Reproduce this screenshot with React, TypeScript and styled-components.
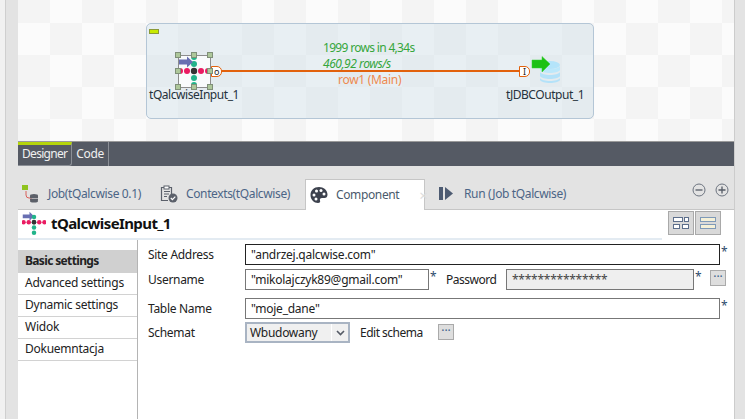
import React from "react";
import styled, { createGlobalStyle } from "styled-components";

/* -------------------------------------------------------------------------- */

const GlobalStyle = createGlobalStyle`
  html, body {
    margin: 0;
    background: #e3e3e3;
  }
  * {
    box-sizing: border-box;
  }
`;

const uiFont = `"Noto Sans", "Open Sans", sans-serif`;

const Page = styled.div`
  width: 745px;
  height: 419px;
  overflow: hidden;
  display: flex;
  font: 12px/16px ${uiFont};
  letter-spacing: -0.3px;
  color: #2a2a2a;
`;

const LeftRail = styled.div`
  width: 18px;
  flex: none;
  background: linear-gradient(to right, #f1f1f1 5px, #cfcfcf 5px, #cfcfcf 6px, #e3e3e3 6px);
`;

const RightRail = styled.div`
  width: 11px;
  flex: none;
  border-left: 1px solid #cccccc;
`;

const Main = styled.div`
  width: 716px;
  flex: none;
  display: flex;
  flex-direction: column;
`;

/* ------------------------------ Job designer ------------------------------ */

const Canvas = styled.div`
  position: relative;
  height: 142px;
  flex: none;
  background-color: #fbfbfb;
  background-image: conic-gradient(#f4f4f4 25%, transparent 0 50%, #f4f4f4 0 75%, transparent 0);
  background-size: 64px 64px;
  background-position: 32px -9px;
  border-bottom: 1px solid #9a9a9a;
`;

const Subjob = styled.div`
  position: absolute;
  left: 128px;
  top: 23px;
  width: 448px;
  height: 96px;
  background: rgba(205, 222, 232, 0.4);
  border: 1px solid #b4c6d6;
  border-radius: 5px;
`;

const CollapseTag = styled.div`
  position: absolute;
  left: 131px;
  top: 29px;
  width: 10px;
  height: 5px;
  background: #c8ea00;
  border: 1px solid #8b9a38;
`;

const NodeFrame = styled.div`
  position: absolute;
  left: 160px;
  top: 55px;
  width: 33px;
  height: 33px;
  border: 1px solid #8d8d8d;
  background: rgba(255, 255, 255, 0.75);
`;

const Handle = styled.span<{ $x: number; $y: number }>`
  position: absolute;
  left: ${p => p.$x}px;
  top: ${p => p.$y}px;
  width: 6px;
  height: 6px;
  background: #adc79a;
  border: 1px solid #7f8f78;
`;

const FlowLine = styled.div`
  position: absolute;
  left: 202px;
  top: 70px;
  width: 300px;
  height: 2px;
  background: #e2610c;
`;

const Connector = styled.div<{ $x: number }>`
  position: absolute;
  left: ${p => p.$x}px;
  top: 66px;
  width: 11px;
  height: 11px;
  background: #ffffff;
  border: 1px solid #e2610c;
  border-radius: 0 5px 5px 0;
  color: #222222;
  font-size: 9px;
  line-height: 9px;
  text-align: center;
`;

const NodeLabel = styled.div<{ $x: number }>`
  position: absolute;
  left: ${p => p.$x}px;
  top: 87px;
  white-space: nowrap;
  letter-spacing: -0.45px;
  color: #26323c;
`;

const Stat = styled.div<{ $x: number; $y: number; $italic?: boolean; $orange?: boolean; $tight?: number }>`
  position: absolute;
  left: ${p => p.$x}px;
  top: ${p => p.$y}px;
  white-space: nowrap;
  letter-spacing: ${p => p.$tight ?? -0.3}px;
  color: ${p => (p.$orange ? "#ee8a4f" : "#35a63c")};
  font-style: ${p => (p.$italic ? "italic" : "normal")};
`;

const NodeIcon = styled.svg<{ $x: number; $y: number }>`
  position: absolute;
  left: ${p => p.$x}px;
  top: ${p => p.$y}px;
`;

/* ---------------------------- Designer / Code bar --------------------------- */

const EditorBar = styled.div`
  height: 24px;
  flex: none;
  display: flex;
  background: #555a64;
  margin-bottom: 13px;
`;

const EditorTab = styled.div<{ $active?: boolean }>`
  padding: ${p => (p.$active ? "1px 4px 0" : "4px 4px 0")};
  border-top: ${p => (p.$active ? "3px solid #b5d50c" : "none")};
  border-right: 1px solid #8b8f96;
  border-bottom: ${p => (p.$active ? "1px solid #8b8f96" : "none")};
  border-bottom-right-radius: ${p => (p.$active ? "3px" : "0")};
  letter-spacing: ${p => (p.$active ? "-0.7px" : "-0.3px")};
  color: #f0f0f0;
`;

/* ------------------------------- Tabbed panel ------------------------------ */

const TabRow = styled.div`
  height: 31px;
  flex: none;
  display: flex;
  align-items: stretch;
  position: relative;
  border-bottom: 1px solid #c6c6c6;
`;

const Tab = styled.div<{ $w: number; $pad: number; $active?: boolean }>`
  width: ${p => p.$w}px;
  padding-left: ${p => p.$pad}px;
  display: flex;
  align-items: center;
  gap: 8px;
  letter-spacing: -0.37px;
  color: ${p => (p.$active ? "#4a5a6c" : "#4c6586")};
  background: ${p => (p.$active ? "#ffffff" : "transparent")};
  ${p => (p.$active ? "border: 1px solid #c6c6c6; border-bottom: none; height: 31px;" : "")}
`;

const TabIcon = styled.svg`
  width: 18px;
  height: 18px;
  flex: none;
`;

const TabClose = styled.span`
  margin-left: 12px;
  color: #dddddd;
  font-size: 15px;
`;

const WindowButtons = styled.div`
  margin-left: auto;
  padding: 4px 5px 0 0;
  display: flex;
  gap: 9px;
`;

/* --------------------------------- Header --------------------------------- */

const Header = styled.div`
  height: 30px;
  flex: none;
  display: flex;
  background: #ffffff;
`;

const TitleBar = styled.div`
  width: 644px;
  display: flex;
  align-items: center;
  gap: 5px;
  padding: 0 0 2px 4px;
  border-bottom: 2px solid #e3ebf2;
`;

const Title = styled.h1`
  margin: 0;
  font: 700 15px/20px ${uiFont};
  letter-spacing: -0.6px;
  color: #111111;
`;

const ViewButtons = styled.div`
  display: flex;
  gap: 1px;
  padding: 1px 0 0 6px;
`;

const ViewButton = styled.button`
  width: 26px;
  height: 24px;
  padding: 0;
  display: flex;
  align-items: center;
  justify-content: center;
  background: #d9d9d9;
  border: 1px solid #a9a9a9;
`;

/* ---------------------------------- Body ---------------------------------- */

const Body = styled.div`
  flex: 1;
  display: flex;
  background: #ffffff;
`;

const Sidebar = styled.nav`
  width: 120px;
  flex: none;
  padding-top: 10px;
  border-right: 1px solid #b4b4b4;
`;

const SideItem = styled.div<{ $active?: boolean }>`
  height: ${p => (p.$active ? "23px" : "22px")};
  line-height: ${p => (p.$active ? "22px" : "20px")};
  padding-left: 7px;
  background: ${p => (p.$active ? "#d0d0d0" : "transparent")};
  border-bottom: ${p => (p.$active ? "none" : "1px solid #d2d2d2")};
  font-weight: ${p => (p.$active ? 700 : 400)};
  letter-spacing: ${p => (p.$active ? "-0.65px" : "-0.25px")};
  color: #222222;
`;

const Form = styled.div`
  flex: 1;
  padding: 4px 0 0 10px;
`;

const FormRow = styled.div<{ $top: number }>`
  display: flex;
  align-items: flex-start;
  margin-top: ${p => p.$top}px;
`;

const FieldLabel = styled.label`
  width: 97px;
  flex: none;
  line-height: 21px;
  color: #222222;
`;

const TextField = styled.input<{ $w: number; $focus?: boolean; $muted?: boolean }>`
  width: ${p => p.$w}px;
  height: 21px;
  padding: 0 0 0 5px;
  font: 12px ${uiFont};
  letter-spacing: -0.25px;
  color: ${p => (p.$muted ? "#444444" : "#222222")};
  background: ${p => (p.$muted ? "#efefef" : "#ffffff")};
  border: 1px solid ${p => (p.$focus ? "#222222" : "#777777")};
  border-radius: 0;
  outline: none;
`;

const Required = styled.span`
  width: 10px;
  flex: none;
  padding-left: 1px;
  line-height: 15px;
  color: #2e4a6b;
`;

const InlineLabel = styled.label<{ $w: number; $left: number }>`
  width: ${p => p.$w}px;
  flex: none;
  margin-left: ${p => p.$left}px;
  line-height: 21px;
  letter-spacing: -0.5px;
  color: #222222;
`;

const DotsButton = styled.button<{ $left: number; $top: number }>`
  width: 16px;
  height: 16px;
  flex: none;
  margin: ${p => p.$top}px 0 0 ${p => p.$left}px;
  padding: 0 0 3px;
  background: #dedede;
  border: 1px solid #aaaaaa;
  color: #3f5f8a;
  font: 12px/10px ${uiFont};
`;

const SelectBox = styled.div`
  width: 105px;
  height: 21px;
  flex: none;
  display: flex;
  background: #f0f0f0;
  border: 2px solid #a9b4c3;
`;

const SelectValue = styled.span`
  flex: 1;
  padding-left: 3px;
  line-height: 17px;
  color: #222222;
`;

const SelectArrow = styled.span`
  width: 17px;
  flex: none;
  display: flex;
  align-items: center;
  justify-content: center;
  border-left: 1px solid #ffffff;
`;

/* ---------------------------------- Icons --------------------------------- */

const HeaderMark = () => (
  <svg width="24" height="24" viewBox="0 0 32 32">
    <path d="M1 4.5h9V1l6 6-6 6V9.5H1z" fill="#686fb2" />
    {[2, 9, 23, 30].map(x => <circle key={x} cx={x} cy="15" r="3" fill="#ea1c62" />)}
    {[8, 22, 29].map(y => <circle key={y} cx="16" cy={y} r="3" fill="#21b48a" />)}
    <circle cx="16" cy="15" r="3.2" fill="#333333" />
  </svg>
);

const JobIcon = () => (
  <TabIcon viewBox="0 0 18 18">
    <path d="M4 6v4q0 3 3 3h3" fill="none" stroke="#d9605a" />
    <rect x="0" y="0" width="6" height="5" fill="#8fc31f" />
    <ellipse cx="12" cy="10.5" rx="4" ry="1.5" fill="#5c6069" />
    <rect x="8" y="11" width="8" height="2" fill="#5c6069" />
    <rect x="8" y="13.6" width="8" height="2" fill="#5c6069" />
    <ellipse cx="12" cy="16" rx="4" ry="1.5" fill="#5c6069" />
  </TabIcon>
);

const ContextsIcon = () => (
  <TabIcon viewBox="0 0 18 18">
    <path d="M8 15.5H1.5v-13h10v8" fill="none" stroke="#5b606a" strokeWidth="1.2" />
    <rect x="4" y="1" width="5" height="3" fill="#ffffff" stroke="#5b606a" />
    <path d="M4 6.5h6M4 9h5M4 11.5h3" stroke="#5b606a" />
    <circle cx="13" cy="13" r="4.5" fill="#5b606a" />
    <path d="M10.8 13l1.6 1.7 2.9-3" fill="none" stroke="#ffffff" strokeWidth="1.2" />
  </TabIcon>
);

const PaletteIcon = () => (
  <TabIcon viewBox="0 0 18 18">
    <path
      d="M9 1C4 1 .5 4.5.5 9S4 17 8 17c2 0 2.5-1.2 2-2.4-.5-1.3.3-2.6 2-2.6h2.5c1.8 0 3-1 3-3.5C17.5 4 13.5 1 9 1z"
      fill="#3d424e"
    />
    <circle cx="4" cy="9" r="1.5" fill="#ffffff" />
    <circle cx="6.5" cy="5" r="1.5" fill="#ffffff" />
    <circle cx="11" cy="4.5" r="1.5" fill="#ffffff" />
    <circle cx="14" cy="8" r="1.5" fill="#ffffff" />
    <circle cx="6" cy="13" r="1.5" fill="#ffffff" />
  </TabIcon>
);

const RunIcon = () => (
  <TabIcon viewBox="0 0 18 18">
    <rect x="1" y="2" width="4" height="13" fill="#4d5b72" />
    <path d="M7 2l8 6.5L7 15z" fill="#4d5b72" />
  </TabIcon>
);

const RoundButton = ({ plus }: { plus?: boolean }) => (
  <svg width="14" height="14" viewBox="0 0 14 14">
    <circle cx="7" cy="7" r="6" fill="none" stroke="#6d7480" />
    <path d={plus ? "M3.5 7h7M7 3.5v7" : "M3.5 7h7"} stroke="#555b66" strokeWidth="1.3" />
  </svg>
);

const TwoColumnsIcon = () => (
  <svg width="16" height="14" viewBox="0 0 16 14">
    <g fill="#ffffff" stroke="#5d6f8c">
      <rect x=".5" y="1.5" width="9" height="4" />
      <rect x="11.5" y="1.5" width="4" height="4" />
      <rect x=".5" y="8.5" width="6" height="4" />
      <rect x="9.5" y="8.5" width="6" height="4" />
    </g>
  </svg>
);

const OneColumnIcon = () => (
  <svg width="16" height="14" viewBox="0 0 16 14">
    <g fill="#f4f0d8" stroke="#7f9ab8">
      <rect x=".5" y="1.5" width="15" height="4" />
      <rect x=".5" y="8.5" width="15" height="4" />
    </g>
  </svg>
);

/* -------------------------------------------------------------------------- */

const sideItems = ["Advanced settings", "Dynamic settings", "Widok", "Dokuemntacja"];

const handles = [
  [-4, -4], [12, -4], [28, -4],
  [-4, 12], [28, 12],
  [-4, 28], [12, 28], [28, 28],
];

const App = () => {
  return (
    <Page>
      <GlobalStyle />
      <LeftRail />
      <Main>
        <Canvas>
          <Subjob />
          <CollapseTag />
          <Stat $x={305} $y={40} $tight={-0.68}>1999 rows in 4,34s</Stat>
          <Stat $x={305} $y={56} $italic $tight={-0.45}>460,92 rows/s</Stat>
          <Stat $x={320} $y={72} $orange>row1 (Main)</Stat>
          <FlowLine />
          <Connector $x={193}>o</Connector>
          <NodeFrame>
            <NodeIcon $x={-1} $y={-1} width="33" height="33" viewBox="0 0 33 33">
              {[2, 9, 23, 30].map(x => <circle key={x} cx={x} cy="16" r="3" fill="#ea1c62" />)}
              {[2, 9, 23, 30].map(y => <circle key={y} cx="16" cy={y} r="3" fill="#21b48a" />)}
              <circle cx="16" cy="16" r="3.2" fill="#333333" />
              <path d="M1 4.5h8V1.5l6 5.5-6 5.5V9.5H1z" fill="#686fb2" />
            </NodeIcon>
            {handles.map(([x, y]) => <Handle key={`${x}-${y}`} $x={x} $y={y} />)}
          </NodeFrame>
          <NodeLabel $x={131}>tQalcwiseInput_1</NodeLabel>
          <Connector $x={501}>I</Connector>
          <NodeIcon $x={513} $y={56} width="30" height="30" viewBox="0 0 30 30">
            <ellipse cx="19" cy="9" rx="10" ry="4" fill="#b4e4fa" />
            <path d="M9 10c2 4 18 4 20 0v4c-2 4-18 4-20 0z" fill="#bce8fb" />
            <path d="M9 16c2 4 18 4 20 0v4c-2 4-18 4-20 0z" fill="#b4e2f9" />
            <path d="M9 22c2 4 18 4 20 0v2c-2 4-18 4-20 0z" fill="#b4e2f9" />
            <path d="M1 4h10V0.5l8 7.5-8 8V12H1z" fill="#1cc114" stroke="#36d030" strokeWidth="0.5" />
          </NodeIcon>
          <NodeLabel $x={488}>tJDBCOutput_1</NodeLabel>
        </Canvas>

        <EditorBar>
          <EditorTab $active>Designer</EditorTab>
          <EditorTab>Code</EditorTab>
        </EditorBar>

        <TabRow>
          <Tab $w={137} $pad={4}><JobIcon />Job(tQalcwise 0.1)</Tab>
          <Tab $w={150} $pad={5}><ContextsIcon />Contexts(tQalcwise)</Tab>
          <Tab $w={120} $pad={4} $active><PaletteIcon />Component<TabClose>×</TabClose></Tab>
          <Tab $w={200} $pad={13}><RunIcon />Run (Job tQalcwise)</Tab>
          <WindowButtons>
            <RoundButton />
            <RoundButton plus />
          </WindowButtons>
        </TabRow>

        <Header>
          <TitleBar>
            <HeaderMark />
            <Title>tQalcwiseInput_1</Title>
          </TitleBar>
          <ViewButtons>
            <ViewButton><TwoColumnsIcon /></ViewButton>
            <ViewButton><OneColumnIcon /></ViewButton>
          </ViewButtons>
        </Header>

        <Body>
          <Sidebar>
            <SideItem $active>Basic settings</SideItem>
            {sideItems.map(item => <SideItem key={item}>{item}</SideItem>)}
          </Sidebar>
          <Form>
            <FormRow $top={0}>
              <FieldLabel>Site Address</FieldLabel>
              <TextField $w={475} $focus readOnly value={'"andrzej.qalcwise.com"'} />
              <Required>*</Required>
            </FormRow>
            <FormRow $top={4}>
              <FieldLabel>Username</FieldLabel>
              <TextField $w={184} readOnly value={'"mikolajczyk89@gmail.com"'} />
              <Required>*</Required>
              <InlineLabel $w={60} $left={7}>Password</InlineLabel>
              <TextField $w={188} $muted readOnly value="***************" />
              <Required>*</Required>
              <DotsButton $left={6} $top={1}>···</DotsButton>
            </FormRow>
            <FormRow $top={8}>
              <FieldLabel>Table Name</FieldLabel>
              <TextField $w={475} readOnly value={'"moje_dane"'} />
              <Required>*</Required>
            </FormRow>
            <FormRow $top={3}>
              <FieldLabel>Schemat</FieldLabel>
              <SelectBox>
                <SelectValue>Wbudowany</SelectValue>
                <SelectArrow>
                  <svg width="9" height="6" viewBox="0 0 9 6">
                    <path d="M1 1l3.5 3.5L8 1" fill="none" stroke="#555b66" strokeWidth="1.6" />
                  </svg>
                </SelectArrow>
              </SelectBox>
              <InlineLabel $w={78} $left={10}>Edit schema</InlineLabel>
              <DotsButton $left={0} $top={2}>···</DotsButton>
            </FormRow>
          </Form>
        </Body>
      </Main>
      <RightRail />
    </Page>
  );
};

export default App;
